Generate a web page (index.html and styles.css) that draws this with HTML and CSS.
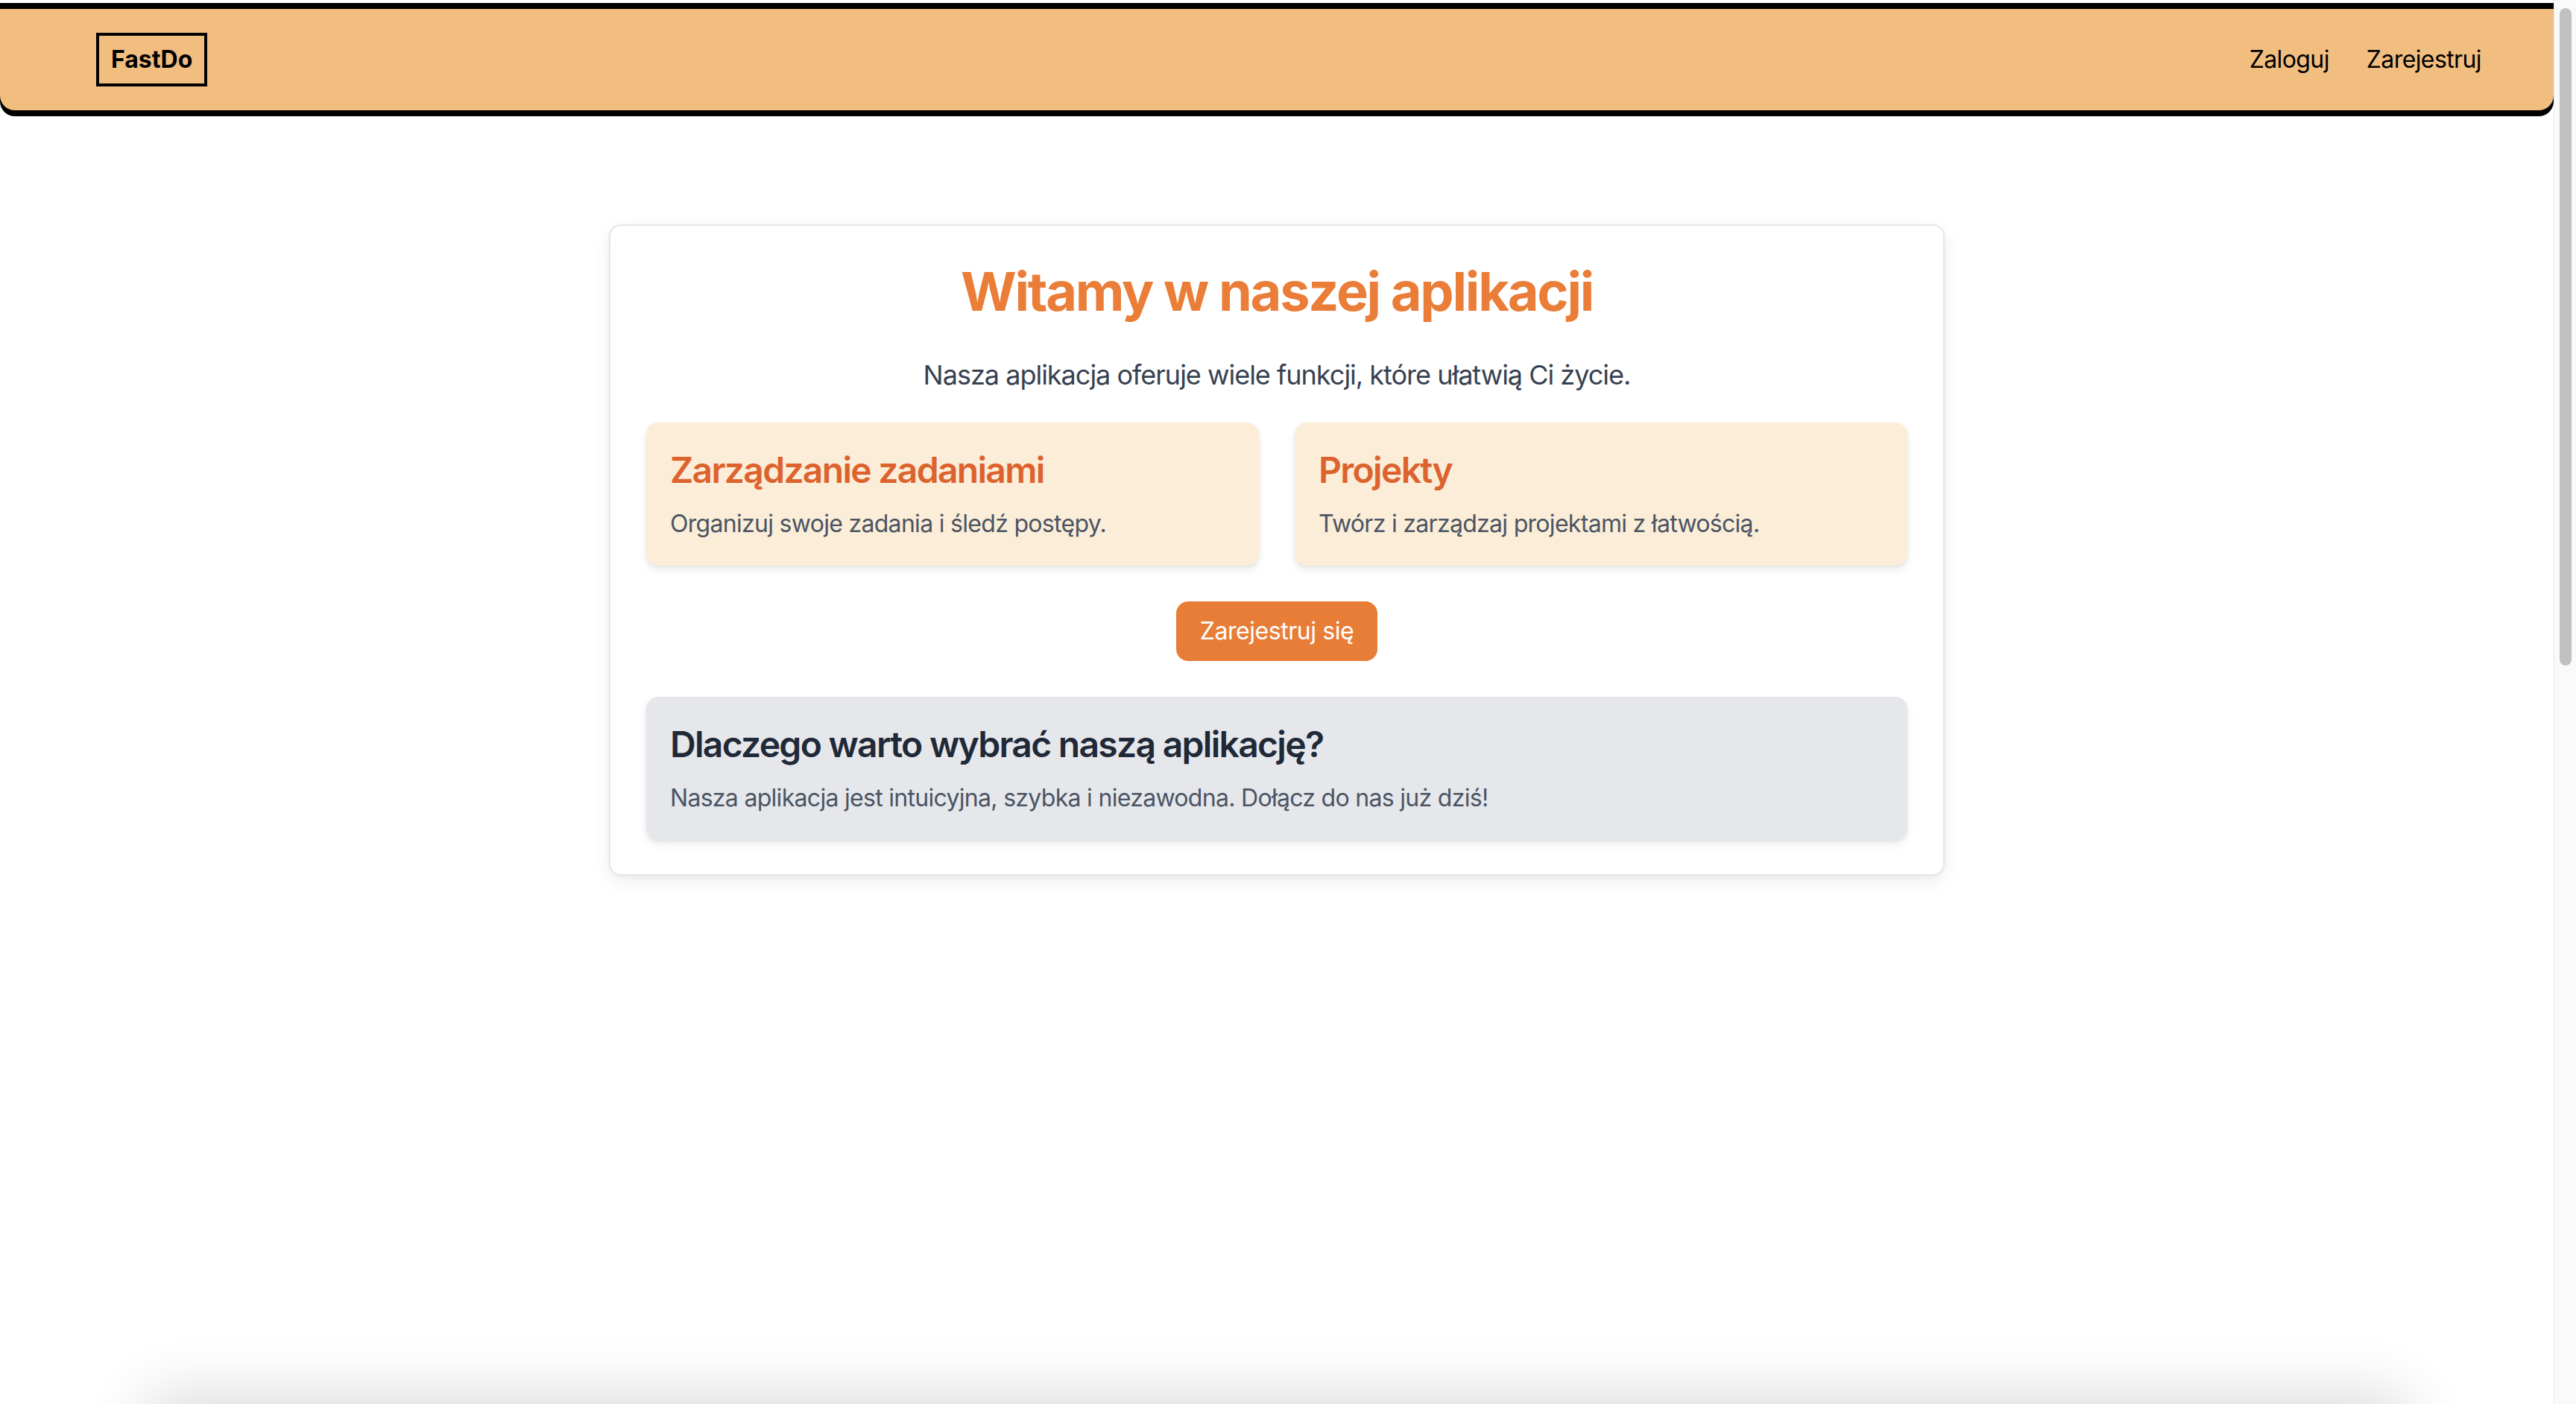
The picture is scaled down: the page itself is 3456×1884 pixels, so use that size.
FILE: index.html
```html
<!DOCTYPE html>
<html lang="pl">
<head>
<meta charset="utf-8">
<title>FastDo</title>
<link rel="stylesheet" href="styles.css">
</head>
<body>
<div class="page">
  <header class="topbar">
    <a class="logo" href="#">FastDo</a>
    <nav class="nav">
      <a href="#" class="nav-link">Zaloguj</a>
      <a href="#" class="nav-link">Zarejestruj</a>
    </nav>
  </header>

  <main class="main">
    <section class="card">
      <h1 class="title">Witamy w naszej aplikacji</h1>
      <p class="subtitle">Nasza aplikacja oferuje wiele funkcji, które ułatwią Ci życie.</p>
      <div class="features">
        <div class="feature">
          <h2 class="feature-title">Zarządzanie zadaniami</h2>
          <p class="feature-text">Organizuj swoje zadania i śledź postępy.</p>
        </div>
        <div class="feature">
          <h2 class="feature-title">Projekty</h2>
          <p class="feature-text">Twórz i zarządzaj projektami z łatwością.</p>
        </div>
      </div>
      <div class="cta-row">
        <a href="#" class="cta">Zarejestruj się</a>
      </div>
      <div class="why">
        <h2 class="why-title">Dlaczego warto wybrać naszą aplikację?</h2>
        <p class="why-text">Nasza aplikacja jest intuicyjna, szybka i niezawodna. Dołącz do nas już dziś!</p>
      </div>
    </section>
  </main>

  <section class="lower"></section>
</div>
<div class="scrollbar"><div class="scrollbar-thumb"></div></div>
</body>
</html>
```

FILE: styles.css
```css
html, body {
  margin: 0;
  padding: 0;
  background: #ffffff;
}

html {
  overflow: hidden;
}

body {
  font-family: Inter, "Noto Sans", "Liberation Sans", sans-serif;
  color: #111827;
  padding-right: 30px;
}

.scrollbar {
  position: fixed;
  top: 0;
  right: 0;
  bottom: 0;
  width: 29px;
  background: #fafafa;
  border-left: 1px solid #e9e9e9;
}

.scrollbar-thumb {
  position: absolute;
  top: 11px;
  left: 7px;
  width: 16px;
  height: 882px;
  border-radius: 8px;
  background: #c1c1c1;
}

.page {
  padding-top: 4px;
}

a {
  text-decoration: none;
  color: inherit;
}

.topbar {
  display: flex;
  justify-content: space-between;
  align-items: center;
  background: #f2be80;
  border-top: 8px solid #000;
  border-radius: 0 0 20px 20px;
  box-shadow: 0 8px 0 #000;
  padding: 32px 97px 32px 129px;
}

.logo {
  display: block;
  border: 4px solid #000;
  padding: 8px 16px;
  font-size: 32px;
  line-height: 48px;
  font-weight: 700;
  color: #000;
}

.nav {
  display: flex;
  gap: 50px;
}

.nav-link {
  font-size: 32px;
  line-height: 48px;
  color: #000;
  letter-spacing: -0.6px;
}

.main {
  padding-top: 153px;
}

.card {
  box-sizing: border-box;
  width: 1792px;
  margin: 0 auto;
  background: #fff;
  border: 2px solid #e5e7eb;
  border-radius: 16px;
  box-shadow: 0 8px 24px rgba(0, 0, 0, 0.07), 0 2px 6px rgba(0, 0, 0, 0.04);
  padding: 48px 48px 46px;
}

.title {
  margin: 0 0 48px;
  text-align: center;
  font-size: 72px;
  line-height: 80px;
  font-weight: 700;
  color: #ea7d37;
  letter-spacing: -2.2px;
}

.subtitle {
  margin: 0 0 40px;
  text-align: center;
  font-size: 36px;
  line-height: 48px;
  color: #374151;
  letter-spacing: -1px;
}

.features {
  display: grid;
  grid-template-columns: 1fr 1fr;
  gap: 48px;
}

.feature {
  background: #fcedd8;
  border-radius: 16px;
  padding: 32px;
  box-shadow: 0 6px 12px rgba(0, 0, 0, 0.08), 0 2px 4px rgba(0, 0, 0, 0.05);
}

.feature-title {
  margin: 0 0 16px;
  font-size: 48px;
  line-height: 64px;
  font-weight: 600;
  color: #dc632e;
  letter-spacing: -1.7px;
}

.feature-text {
  margin: 0;
  font-size: 32px;
  line-height: 48px;
  color: #4b5563;
  letter-spacing: -0.7px;
}

.cta-row {
  display: flex;
  justify-content: center;
  margin: 48px 0;
}

.cta {
  display: block;
  background: #e87d37;
  color: #fff;
  font-size: 32px;
  line-height: 48px;
  padding: 16px 32px;
  border-radius: 16px;
  letter-spacing: -0.45px;
}

.why {
  background: #e5e7eb;
  border-radius: 16px;
  padding: 32px;
  box-shadow: 0 6px 12px rgba(0, 0, 0, 0.08), 0 2px 4px rgba(0, 0, 0, 0.05);
}

.why-title {
  margin: 0 0 16px;
  font-size: 48px;
  line-height: 64px;
  font-weight: 600;
  color: #1f2937;
  letter-spacing: -1.7px;
}

.why-text {
  margin: 0;
  font-size: 32px;
  line-height: 48px;
  color: #4b5563;
  letter-spacing: -0.7px;
}

.lower {
  width: 3040px;
  height: 2100px;
  margin: 714px auto 0;
  background: #fff;
  border-radius: 32px;
  box-shadow: 0 -20px 80px rgba(0, 0, 0, 0.14);
}
```
